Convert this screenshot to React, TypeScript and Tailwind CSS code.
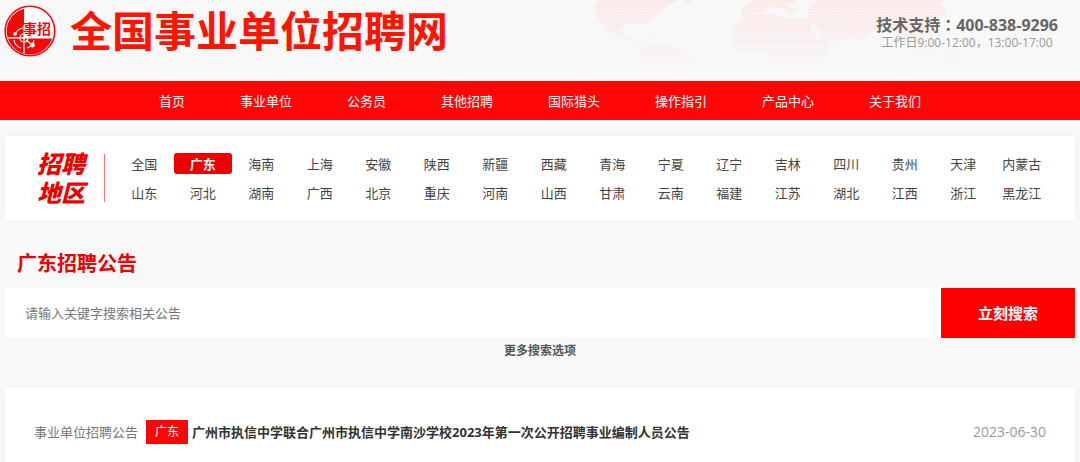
import React, { useState } from "react";

const navItems = [
  "首页",
  "事业单位",
  "公务员",
  "其他招聘",
  "国际猎头",
  "操作指引",
  "产品中心",
  "关于我们",
];

const regions = [
  "全国", "广东", "海南", "上海", "安徽", "陕西", "新疆", "西藏",
  "青海", "宁夏", "辽宁", "吉林", "四川", "贵州", "天津", "内蒙古",
  "山东", "河北", "湖南", "广西", "北京", "重庆", "河南", "山西",
  "甘肃", "云南", "福建", "江苏", "湖北", "江西", "浙江", "黑龙江",
];

const notices = [
  {
    id: 1,
    type: "事业单位招聘公告",
    area: "广东",
    title: "广州市执信中学联合广州市执信中学南沙学校2023年第一次公开招聘事业编制人员公告",
    date: "2023-06-30",
  },
];

const Logo = () => (
  <svg className="size-[52px] shrink-0" viewBox="0 0 52 52" aria-hidden="true">
    <circle cx="26" cy="26" r="24.8" fill="#fff" stroke="#f00a0a" strokeWidth="1.6" />
    <path d="M20 3.8A23 23 0 0 0 3.6 32.5H20Z" fill="#f00a0a" />
    <path d="M3.8 33H48.2A23.2 23.2 0 0 1 3.8 33Z" fill="#f00a0a" />
    <g fill="none" stroke="#fff" strokeWidth="1.2">
      <circle cx="20" cy="33" r="4" />
      <path d="M11 30a10 10 0 0 1 8-7M10 35a10 10 0 0 0 7 8M23 43a10 10 0 0 0 7-8M20 20v29M4 33h44" />
      <path d="M22 35l5 4" />
    </g>
    <circle cx="28.5" cy="40" r="2.4" fill="#fff" />
    <circle cx="11" cy="29" r="1.8" fill="#fff" />
    <circle cx="20" cy="33" r="1.4" fill="#fff" />
    <text x="19" y="29" fontSize="14" fontWeight="700" fill="#f00a0a" fontFamily="Noto Sans CJK SC, sans-serif">
      事招
    </text>
  </svg>
);

const WorldMap = () => (
  <svg className="absolute left-[55%] top-0 h-[66px] w-[400px]" viewBox="2 0 400 66" aria-hidden="true">
    <defs>
      <pattern id="dots" width="3" height="3" patternUnits="userSpaceOnUse">
        <rect width="3" height="3" fill="#fbf0f0" />
        <rect width="2" height="2" fill="#fce4e4" />
      </pattern>
      <linearGradient id="fade" x1="0" y1="0" x2="0" y2="1">
        <stop offset="0" stopColor="#fff" />
        <stop offset="0.4" stopColor="#fff" stopOpacity="0.75" />
        <stop offset="1" stopColor="#fff" stopOpacity="0.05" />
      </linearGradient>
      <mask id="fadeMask">
        <rect width="410" height="66" fill="url(#fade)" />
      </mask>
    </defs>
    <g fill="url(#dots)" mask="url(#fadeMask)">
      <path d="M8 0H86L76 5L66 13L58 20L53 24H34L28 30L32 36H41V40L48 48L56 43L70 43L90 50L96 58L110 63H49L48 49L34 38L20 34L14 26L6 19L2 9Z" />
      <path d="M92 0h7v2h-7zM52 31h5v2h-5zM61 33h3v2h-3z" />
      <path d="M162 0H204V9L200 14H212L226 0H352L344 8L348 16L334 28L330 44L310 40L300 28L286 28L268 42L262 38L238 42L236 53L224 62H178L174 51H146L140 40L142 28L152 17L148 10Z" />
      <path d="M340 10l8-6 6 4v6l-10 2zM320 46l8 5 10 6-8 2-10-7zM336 54h10v3h-10zM352 50h14v8h-14zM352 59h22v4h-22z" />
    </g>
    <path d="M160 13h10l8-6 12 1 10 5h17v6h-24l-12-5h-21zM198 3h9v5h-9zM218 22l6 4 8 13-4 2-8-9z" fill="#f8f8f8" />
  </svg>
);

const App = () => {
  const [current, setCurrent] = useState("广东");
  const [keyword, setKeyword] = useState("");

  return (
    <div className="min-h-screen bg-[#f8f8f8] text-[13px] leading-5 text-[#444] font-['Open_Sans','Noto_Sans_CJK_SC',sans-serif]">
      <header className="relative flex h-[81px] items-start justify-between overflow-hidden pl-1 pr-[22px]">
        <WorldMap />
        <div className="relative flex items-center gap-[14px] pt-[5px]">
          <Logo />
          <h1 className="text-[42px] font-bold leading-[52px] text-[#ff1400]">
            全国事业单位招聘网
          </h1>
        </div>
        <div className="relative pt-[14px] text-center">
          <p className="text-base font-bold leading-5 text-[#666]">
            技术支持
            <span className="font-['Noto_Sans_CJK_TC',sans-serif]">：</span>
            400-838-9296
          </p>
          <p className="text-xs leading-4 text-[#999]">工作日9:00-12:00，13:00-17:00</p>
        </div>
      </header>

      <nav className="flex h-[39px] items-center justify-center gap-[55px] bg-[#ff0505] text-white">
        {navItems.map((item) => (
          <a key={item} href="#" className="whitespace-nowrap">
            {item}
          </a>
        ))}
      </nav>

      <main className="px-[5px]">
        <section className="mt-4 flex items-center bg-white py-[13px] pl-8 pr-6 shadow-[0_0_6px_#f0f0f0]">
          <h2 className="w-[67px] shrink-0 text-2xl font-black italic leading-[29px] text-[#ee0000]">
            招聘
            <br />
            地区
          </h2>
          <div className="h-12 border-l border-[#ff7070]" />
          <div className="ml-[10px] grid flex-1 grid-cols-16 gap-y-2">
            {regions.map((name) => (
              <button
                key={name}
                onClick={() => setCurrent(name)}
                className={
                  name === current
                    ? "h-[21px] rounded-[3px] bg-[#ee0000] font-bold text-white"
                    : "h-[21px] whitespace-nowrap"
                }
              >
                {name}
              </button>
            ))}
          </div>
        </section>

        <h2 className="mt-7 pl-3 text-xl font-bold leading-8 text-[#ee0000]">广东招聘公告</h2>

        <form className="mt-2 flex h-[50px]" onSubmit={(e) => e.preventDefault()}>
          <input
            type="text"
            aria-label="搜索关键字"
            placeholder="请输入关键字搜索相关公告"
            value={keyword}
            onChange={(e) => setKeyword(e.target.value)}
            className="min-w-0 flex-1 bg-white px-5 outline-none placeholder:text-[#777]"
          />
          <button type="submit" className="w-[134px] bg-[#ff0000] text-[15px] font-bold text-white">
            立刻搜索
          </button>
        </form>
        <div className="flex h-[50px] justify-center pt-[3px]">
          <button className="h-5 text-xs font-bold text-[#555]">更多搜索选项</button>
        </div>

        <ul className="bg-white px-[29px] py-8 shadow-[0_0_6px_#f0f0f0]">
          {notices.map((notice) => (
            <li key={notice.id} className="flex items-center">
              <span className="text-[#777]">{notice.type}</span>
              <span className="ml-2 bg-[#ff0505] px-[9px] py-[2px] text-xs leading-5 text-white">
                {notice.area}
              </span>
              <a href="#" className="ml-1 font-bold text-[#333]">
                {notice.title}
              </a>
              <span className="ml-auto text-sm text-[#999]">{notice.date}</span>
            </li>
          ))}
        </ul>
      </main>
    </div>
  );
};

export default App;
